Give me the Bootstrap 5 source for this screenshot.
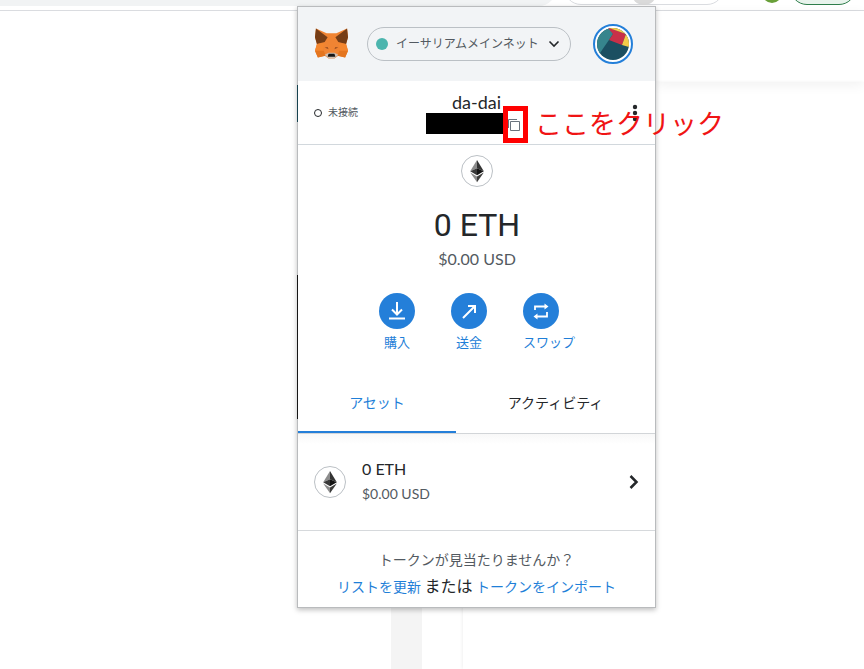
<!DOCTYPE html>
<html lang="ja">
<head>
<meta charset="utf-8">
<meta name="viewport" content="width=device-width, initial-scale=1">
<title>MetaMask</title>
<link href="https://cdn.jsdelivr.net/npm/bootstrap@5.3.0/dist/css/bootstrap.min.css" rel="stylesheet">
<style>
body{font-family:Lato,"Noto Sans CJK JP",sans-serif;color:#24272a;background:#fff;overflow:hidden}
button{font-family:inherit}
.toolbar{height:11px;border-bottom:1px solid #dadce0;overflow:hidden}
.omnibox{width:556px;height:34px;margin-top:-28px;background:#f1f3f4;border-radius:0 0 17px 0}
.ext-pill{width:160px;height:34px;margin-top:-29px;border:1px solid #dadce0;border-radius:17px}
.ext-dot{width:26px;height:26px;margin-top:7px;border-radius:50%;background:#dadada}
.profile{width:20px;height:20px;margin-top:-17px;border-radius:50%;background:#689f38}
.update-pill{width:66px;height:34px;margin-top:-29px;border:1px solid #2e7d4b;border-radius:17px;background:#e8f3ec}
.site-head{height:71px;margin-left:656px;box-shadow:0 3px 12px rgba(0,0,0,.06)}
.gutter{width:31px;background:#f4f4f4;margin-left:391px}
.sheet{margin-left:41px;box-shadow:-1px 0 3px rgba(0,0,0,.06)}
.popup{top:6px;left:297px;width:359px;background:#fff;border:1px solid #b9bbbd;box-shadow:0 2px 5px rgba(0,0,0,.25)}
.edge{left:-1px;top:0;bottom:0;width:1px;background:linear-gradient(#b9bbbd 78px,#16424f 78px,#16424f 115px,#b9bbbd 115px,#b9bbbd 268px,#161616 268px,#161616 412px,#b9bbbd 412px)}
.head-bar{height:74px;background:#f2f4f6;padding:0 22px 0 16px}
.network{width:204px;height:34px;border:1px solid #bbc0c5;border-radius:17px;padding:0 10px 0 8px;margin-left:18px;font-size:12px;color:#535a61;background:transparent}
.net-dot{width:12px;height:12px;border-radius:50%;background:#4cb5ae}
.avatar{width:40px;height:40px;border-radius:50%}
.account{height:64px;border-bottom:1px solid #d2d8dd;padding:0 16px}
.status{width:112px;font-size:10px;color:#535a61}
.ring{width:8px;height:8px;border:1px solid #24272a;border-radius:50%;margin-right:6px}
.acct-name{font-size:18px;line-height:20px;margin-top:11px;padding-right:4px}
.redacted{width:78px;height:21px;background:#000;margin-top:1px}
.mark-box{width:25px;height:37px;border:5px solid #f00;margin:-6px 0 0 -1px}
.copy-icon{margin-left:-3px}
.side{width:108px}
.note{left:237px;top:97px;font-size:27px;line-height:40px;color:#f01414}
.balance{font-family:Roboto,sans-serif;font-size:32px;line-height:40px;margin-top:18px}
.fiat{font-size:16px;line-height:24px;color:#535a61;margin-top:2px}
.hero{padding:10px 0 0 1px}
.actions{gap:36px;margin-top:22px}
.action{font-size:13px;line-height:20px;color:#1f7fd8}
.action-label{margin-top:3px}
.disc{width:36px;height:36px;border-radius:50%;background:#247fd9}
.tabs{height:61px;margin-top:21px;border-bottom:1px solid #d2d5d8}
.tab{font-size:14px;color:#24272a}
.tab-on{flex:0 0 158px;color:#1f7fd8;border-bottom:2px solid #247fd9 !important}
.tab-off{padding:0 0 2px}
.asset{height:97px;padding:0 16px;border-bottom:1px solid #d6d9dc;background:linear-gradient(#f8f8f8,#fff 10px)}
.asset-name{font-size:16px;line-height:24px}
.asset-sub{font-size:14px;line-height:26px;color:#535a61}
.foot{height:76px;padding-top:15px;font-size:14px;line-height:27px;color:#535a61}
.foot a{color:#1f7fd8}
.foot-or{font-size:16px;line-height:24px;color:#24272a}
</style>
<script src="https://cdn.jsdelivr.net/npm/bootstrap@5.3.0/dist/js/bootstrap.bundle.min.js"></script>
</head>
<body class="d-flex flex-column vh-100 position-relative">
<svg class="d-none" aria-hidden="true">
<symbol id="eth" viewBox="0 0 32 32"><circle cx="16" cy="16" r="15.500" fill="#fff" stroke="#bbc0c5"/><path d="M16 5 9.200 16.300 16 13.200Z" fill="#8c8c8c"/><path d="M16 5 22.800 16.300 16 13.200Z" fill="#343434"/><path d="M9.200 16.300 16 13.200V20.300Z" fill="#393939"/><path d="M22.800 16.300 16 13.200V20.300Z" fill="#141414"/><path d="M9.200 17.600 16 21.600V27.200Z" fill="#8c8c8c"/><path d="M22.800 17.600 16 21.600V27.200Z" fill="#3c3c3b"/></symbol>
</svg>
<div class="toolbar d-flex flex-shrink-0">
<div class="omnibox flex-shrink-0"></div>
<div class="ext-pill d-flex justify-content-center ms-2 flex-shrink-0"><span class="ext-dot"></span></div>
<div class="profile ms-auto me-2"></div><div class="update-pill me-2"></div>
</div>
<div class="site-head flex-shrink-0"></div>
<div class="d-flex flex-grow-1"><div class="gutter"></div><div class="sheet flex-grow-1"></div></div>

<main class="popup position-absolute">
<span class="edge position-absolute"></span>
<header class="head-bar d-flex align-items-center">
<svg width="35" height="34" viewBox="0 0 36 34" role="img" aria-label="MetaMask"><path d="M2 1 13 6H23L34 1 35 10 33 17 35 24 32 31 25 29 21 32H15L11 29 4 31 1 24 3 17 1 10Z" fill="#f08433"/><path d="M2 1 14 10 11 15 3 17 1 10ZM34 1 22 10 25 15 33 17 35 10Z" fill="#763d16"/><path d="M3 17 11 16 9 24H1ZM33 17 25 16 27 24H35Z" fill="#f5872f"/><path d="M1 24H10L12 29 4 31ZM35 24H26L24 29 32 31Z" fill="#e4751f"/><path d="M11 20.500 14 20 15 22.500ZM25 20.500 22 20 21 22.500Z" fill="#9a4f22"/><path d="M11 28 15 26H21L25 28 21 32H15Z" fill="#d0bfb1"/><path d="M15 27H21L22 30H14Z" fill="#161616"/></svg>
<button type="button" class="network d-flex align-items-center me-auto"><span class="net-dot me-2"></span>イーサリアムメインネット<svg class="ms-auto" width="12" height="8" viewBox="0 0 12 8" fill="none" stroke="#24272a" stroke-width="1.600"><path d="m1.500 1.500 4.500 4.500 4.500-4.500"/></svg></button>
<button type="button" class="avatar btn p-0 border-0 d-flex" aria-label="アカウント"><svg width="40" height="40" viewBox="0 0 40 40"><defs><clipPath id="face"><circle cx="20" cy="20" r="16"/></clipPath></defs><circle cx="20" cy="20" r="19" fill="#fff" stroke="#247fd9" stroke-width="2"/><g clip-path="url(#face)"><path d="M0 0H40V40H0Z" fill="#1b4f61"/><path d="M0 0H14L20 10 5 32H0Z" fill="#36858d"/><path d="M14 3 33 10 29 21 16 16 20 10Z" fill="#c83048"/><path d="M17 0H40V24L29 21 33 10 16 4Z" fill="#f5cb49"/></g></svg></button>
</header>
<section class="account d-flex">
<div class="status d-flex align-items-center flex-shrink-0"><span class="ring"></span>未接続</div>
<div class="flex-grow-1">
<div class="acct-name text-center">da-dai</div>
<div class="d-flex"><span class="redacted flex-shrink-0"></span><button type="button" class="mark-box bg-transparent p-0 d-flex align-items-center justify-content-center flex-shrink-0" aria-label="アドレスをコピー"><svg class="copy-icon" width="12" height="12" viewBox="0 0 12 12" fill="none" stroke="#6a737d"><path d="M.5 9V.5H9M2.500 2.500H11.500V11.500H2.500Z"/></svg></button></div>
</div>
<button type="button" class="side btn p-0 border-0 d-flex justify-content-end align-items-center flex-shrink-0" aria-label="メニュー"><svg width="8" height="18" viewBox="0 0 8 18" fill="#24272a"><circle cx="4" cy="3" r="2.200"/><circle cx="4" cy="9" r="2.200"/><circle cx="4" cy="15" r="2.200"/></svg></button>
</section>
<span class="note position-absolute text-nowrap">ここをクリック</span>
<section class="hero text-center">
<svg class="d-block mx-auto" width="32" height="32"><use href="#eth"/></svg>
<div class="balance">0 ETH</div>
<div class="fiat">$0.00 USD</div>
<div class="actions d-flex justify-content-center">
<button type="button" class="action btn p-0 border-0"><span class="disc d-flex align-items-center justify-content-center"><svg width="20" height="20" viewBox="0 0 20 20" fill="none" stroke="#fff" stroke-width="2"><path d="M10 1V13M5 8.500 10 13.500 15 8.500M2 17.500H18"/></svg></span><span class="action-label d-block">購入</span></button>
<button type="button" class="action btn p-0 border-0"><span class="disc d-flex align-items-center justify-content-center"><svg width="18" height="18" viewBox="0 0 18 18" fill="none" stroke="#fff" stroke-width="2"><path d="M3 16 15 4M8 4H15V11"/></svg></span><span class="action-label d-block">送金</span></button>
<button type="button" class="action btn p-0 border-0"><span class="disc d-flex align-items-center justify-content-center"><svg width="18" height="18" viewBox="0 0 18 18" fill="none" stroke="#fff" stroke-width="1.800"><path d="M3 8V4.500H14M15 10V14.500H4"/><path d="M12.500 1.500 16.500 4.500 12.500 7.500ZM5.500 11.500 1.500 14.500 5.500 17.500Z" fill="#fff" stroke="none"/></svg></span><span class="action-label d-block">スワップ</span></button>
</div>
</section>
<div class="tabs d-flex">
<button type="button" class="tab tab-on btn rounded-0 border-0 p-0">アセット</button>
<button type="button" class="tab tab-off btn rounded-0 border-0 flex-grow-1">アクティビティ</button>
</div>
<div class="asset d-flex align-items-center">
<svg class="me-3" width="32" height="32"><use href="#eth"/></svg>
<div><div class="asset-name">0 ETH</div><div class="asset-sub">$0.00 USD</div></div>
<svg class="ms-auto" width="10" height="16" viewBox="0 0 10 16" fill="none" stroke="#24272a" stroke-width="2.500"><path d="m1.500 2 6 6-6 6"/></svg>
</div>
<footer class="foot text-center"><div>トークンが見当たりませんか？</div>
<div><a class="text-decoration-none" href="#">リストを更新</a> <span class="foot-or">または</span> <a class="text-decoration-none" href="#">トークンをインポート</a></div></footer>
</main>
</body>
</html>
